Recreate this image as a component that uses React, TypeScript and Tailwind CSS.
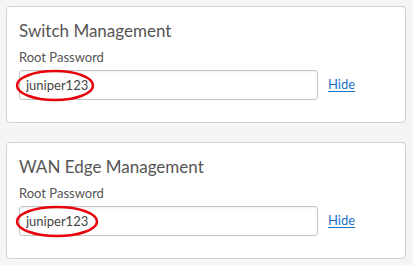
import React from "react";

function Section({ title, ringWidth }: { title: string; ringWidth: number }) {
  return (
    <div className="bg-white border border-[#d2d2d2] rounded-[4px] pl-[12px] pr-4 pt-[12px] pb-[22px]">
      <h2 className="text-[17px] leading-[24px] text-[#555]">{title}</h2>
      <div className="text-[13px] leading-[18px] text-[#555] mt-[5px]">Root Password</div>
      <div className="flex items-center mt-[4px]">
        <div className="relative w-[299px]">
          <input
            readOnly
            value="juniper123"
            className="w-full h-[30px] border border-[#c4c4c4] rounded-[3px] px-[6px] text-[13px] text-[#444] shadow-[inset_0_1px_2px_rgba(0,0,0,0.08)] outline-none"
          />
          <svg
            className="absolute left-[-4px] top-[-1px] pointer-events-none"
            width={ringWidth + 4}
            height="33"
          >
            <ellipse
              cx={(ringWidth + 4) / 2}
              cy="16.5"
              rx={ringWidth / 2}
              ry="14.5"
              fill="none"
              stroke="#e8000b"
              strokeWidth="2.5"
            />
          </svg>
        </div>
        <a href="#" className="ml-[10px] text-[13px] text-[#1a73c4] underline underline-offset-2">
          Hide
        </a>
      </div>
    </div>
  );
}

export default function App() {
  return (
    <div
      className="w-[413px] h-[265px] bg-[#f5f5f5] p-[6px] pr-[7px] flex flex-col gap-[19px]"
      style={{ fontFamily: 'Lato, "Open Sans", sans-serif' }}
    >
      <Section title="Switch Management" ringWidth={76} />
      <Section title="WAN Edge Management" ringWidth={80} />
    </div>
  );
}
